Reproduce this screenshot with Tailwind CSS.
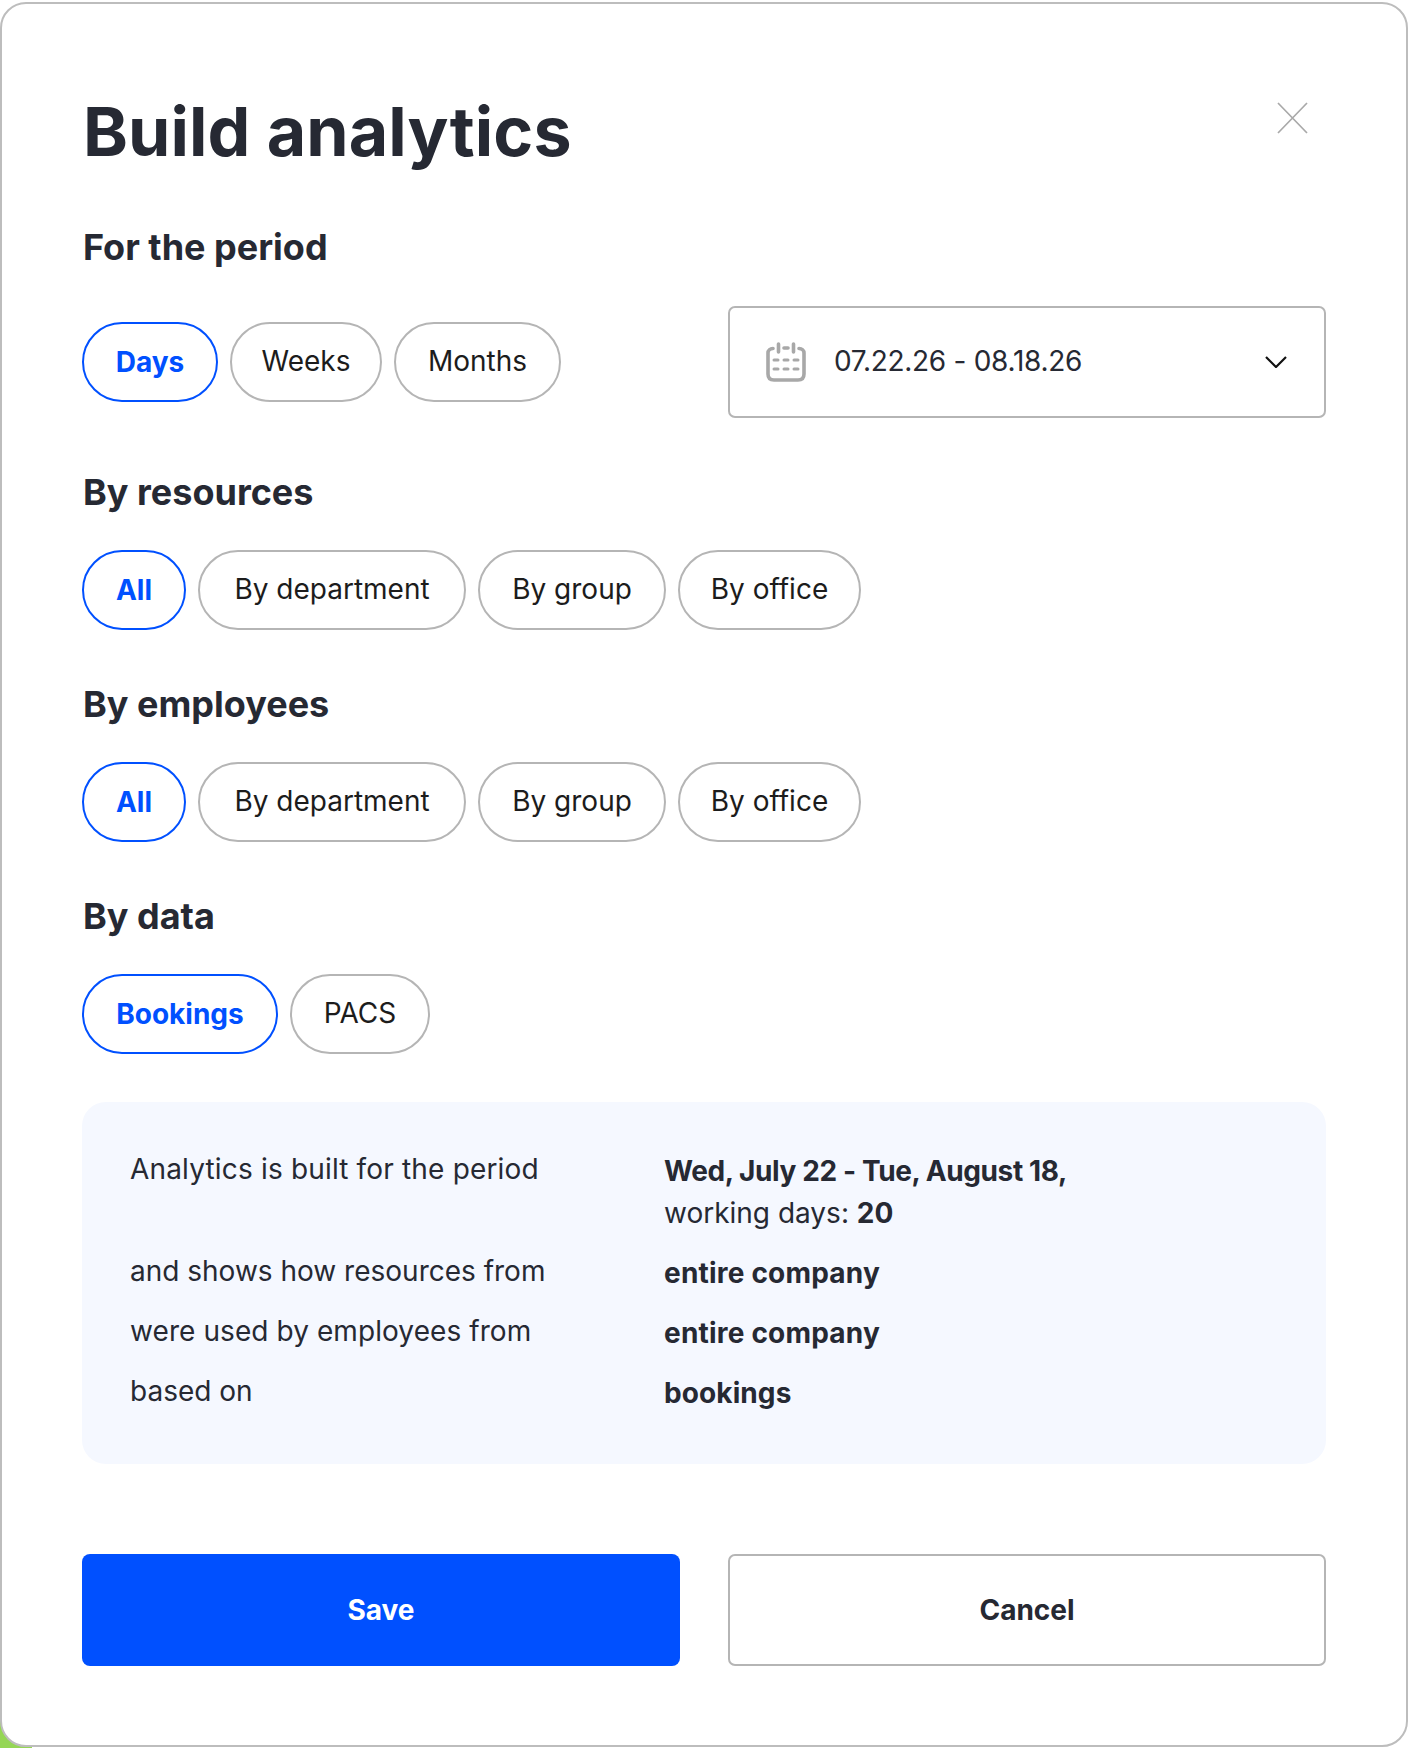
<!DOCTYPE html>
<html lang="en">
<head>
  <meta charset="UTF-8" />
  <title>Build analytics</title>
  <script src="https://cdn.jsdelivr.net/npm/@tailwindcss/browser@4"></script>
</head>
<body class="bg-white text-[#262933] font-['Inter',sans-serif]">
  <div class="relative w-[1408px] h-[1748px] overflow-hidden">
    <!-- green page colour showing at the corner -->
    <div class="absolute left-0 bottom-0 w-8 h-8 bg-[#95d655]"></div>

    <div class="relative h-[1745px] mt-[2px] bg-white border-2 border-[#bdbdbd] rounded-[26px] pl-[80px] pr-[80px] pt-[91px]">
      <!-- Header -->
      <div class="flex justify-between h-[72px]">
        <h1 class="pl-[1px] text-[68px] leading-[72px] font-bold tracking-[0.1px]">Build analytics</h1>
        <svg class="mt-[7px] mr-[18px] w-[31px] h-[32px]" viewBox="0 0 31 32" fill="none" stroke="#a9a9a9" stroke-width="1.7"><path d="M1 1 L30 31 M30 1 L1 31"/></svg>
      </div>

      <!-- Period -->
      <h2 class="mt-[58px] pl-[1px] text-[36px] leading-[44px] font-bold">For the period</h2>
      <div class="mt-[37px] flex items-center justify-between">
        <div class="flex gap-[12px]">
          <button class="w-[136px] h-[80px] rounded-[40px] border-2 border-[#0050ff] text-[#0050ff] text-[28px] font-bold">Days</button>
          <button class="w-[152px] h-[80px] pb-[3px] rounded-[40px] border-2 border-[#b5b5b5] text-[#1c1c1c] text-[28px]">Weeks</button>
          <button class="w-[167px] h-[80px] pb-[3px] rounded-[40px] border-2 border-[#b5b5b5] text-[#1c1c1c] text-[28px]">Months</button>
        </div>
        <div class="w-[598px] h-[112px] flex items-center border-2 border-[#b5b5b5] rounded-[7px] pl-[36px] pr-[37px]">
          <svg class="w-[40px] h-[40px] shrink-0" viewBox="0 0 40 40" fill="none" stroke="#a8a8a8" stroke-width="3.6" stroke-linecap="round">
            <path d="M7 6.5 C4 6.5 2 8.5 2 11 V32 C2 36 4 38 8 38 H32 C36 38 38 36 38 32 V11 C38 8.5 36 6.5 33 6.5"/>
            <path d="M12.5 2 V10 M27.5 2 V10 M18 6 H22"/>
            <path stroke-width="3" d="M8 18 H12 M18 18 H22 M28 18 H32 M8 27 H12 M18 27 H22 M28 27 H32"/>
          </svg>
          <span class="ml-[28px] pb-[2px] text-[28px] tracking-[-0.28px] text-[#262933]">07.22.26 - 08.18.26</span>
          <svg class="ml-auto w-[22px] h-[12px]" viewBox="0 0 22 12" fill="none" stroke="#111" stroke-width="2.2"><path d="M1 1 L11 11 L21 1"/></svg>
        </div>
      </div>

      <!-- Resources -->
      <h2 class="mt-[52px] pl-[1px] text-[36px] leading-[44px] font-bold">By resources</h2>
      <div class="mt-[36px] flex gap-[12px]">
        <button class="w-[104px] h-[80px] rounded-[40px] border-2 border-[#0050ff] text-[#0050ff] text-[28px] font-bold">All</button>
        <button class="w-[268px] h-[80px] pb-[3px] rounded-[40px] border-2 border-[#b5b5b5] text-[#1c1c1c] text-[28px]">By department</button>
        <button class="w-[188px] h-[80px] pb-[3px] rounded-[40px] border-2 border-[#b5b5b5] text-[#1c1c1c] text-[28px]">By group</button>
        <button class="w-[183px] h-[80px] pb-[3px] rounded-[40px] border-2 border-[#b5b5b5] text-[#1c1c1c] text-[28px]">By office</button>
      </div>

      <!-- Employees -->
      <h2 class="mt-[52px] pl-[1px] text-[36px] leading-[44px] font-bold">By employees</h2>
      <div class="mt-[36px] flex gap-[12px]">
        <button class="w-[104px] h-[80px] rounded-[40px] border-2 border-[#0050ff] text-[#0050ff] text-[28px] font-bold">All</button>
        <button class="w-[268px] h-[80px] pb-[3px] rounded-[40px] border-2 border-[#b5b5b5] text-[#1c1c1c] text-[28px]">By department</button>
        <button class="w-[188px] h-[80px] pb-[3px] rounded-[40px] border-2 border-[#b5b5b5] text-[#1c1c1c] text-[28px]">By group</button>
        <button class="w-[183px] h-[80px] pb-[3px] rounded-[40px] border-2 border-[#b5b5b5] text-[#1c1c1c] text-[28px]">By office</button>
      </div>

      <!-- Data -->
      <h2 class="mt-[52px] pl-[1px] text-[36px] leading-[44px] font-bold">By data</h2>
      <div class="mt-[36px] flex gap-[12px]">
        <button class="w-[196px] h-[80px] rounded-[40px] border-2 border-[#0050ff] text-[#0050ff] text-[28px] font-bold">Bookings</button>
        <button class="w-[140px] h-[80px] pb-[3px] rounded-[40px] border-2 border-[#b5b5b5] text-[#1c1c1c] text-[28px]">PACS</button>
      </div>

      <!-- Summary -->
      <div class="mt-[48px] h-[362px] bg-[#f5f8ff] rounded-[24px] pl-[48px] pt-[48px] grid grid-cols-[534px_1fr] gap-y-[18px] content-start text-[28px]">
        <div class="leading-[38px] tracking-[0.17px]">Analytics is built for the period</div>
        <div class="leading-[42px]"><b class="font-bold tracking-[-0.4px]">Wed, July 22 - Tue, August 18,</b><br>working days: <b class="font-bold">20</b></div>
        <div class="leading-[38px]">and shows how resources from</div>
        <div class="leading-[42px] font-bold tracking-[0.2px]">entire company</div>
        <div class="leading-[38px] tracking-[0.08px]">were used by employees from</div>
        <div class="leading-[42px] font-bold tracking-[0.2px]">entire company</div>
        <div class="leading-[38px]">based on</div>
        <div class="leading-[42px] font-bold tracking-[0.1px]">bookings</div>
      </div>

      <!-- Actions -->
      <div class="mt-[90px] grid grid-cols-2 gap-[48px]">
        <button class="h-[112px] bg-[#0050ff] text-white rounded-[8px] text-[28px] font-bold">Save</button>
        <button class="h-[112px] border-2 border-[#b5b5b5] rounded-[7px] text-[28px] font-bold">Cancel</button>
      </div>
    </div>
  </div>
</body>
</html>
